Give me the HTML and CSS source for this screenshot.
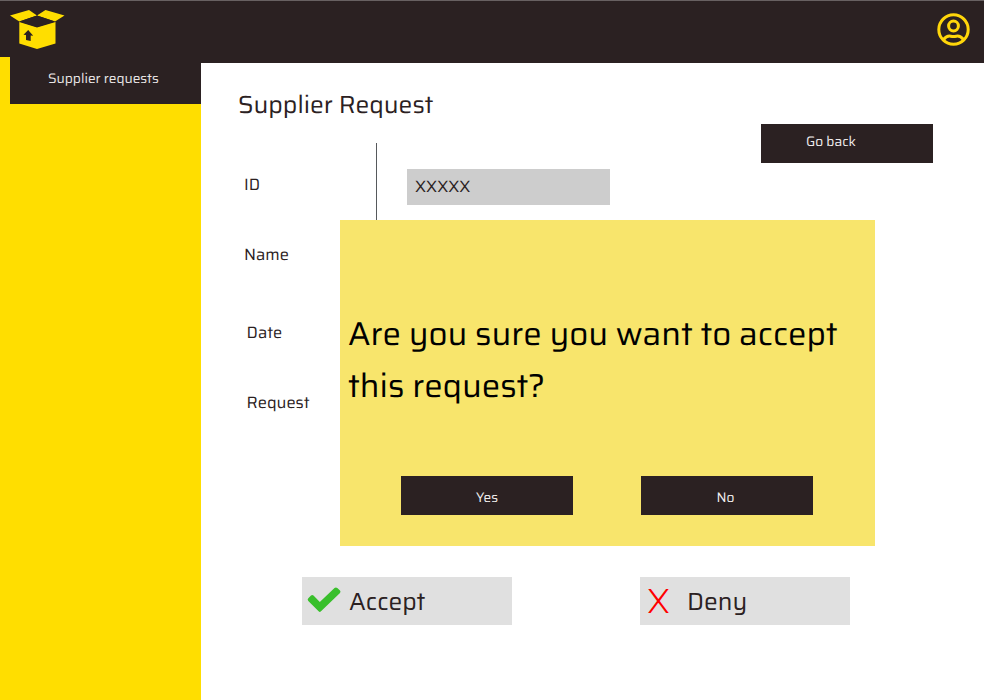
FILE: index.html
```html
<!DOCTYPE html>
<html lang="en">
<head>
<meta charset="utf-8">
<title>Supplier Request</title>
<link rel="stylesheet" href="styles.css">
</head>
<body>
<header class="topbar">
  <svg class="logo" width="55" height="40" viewBox="0 0 55 40" aria-label="Home">
    <path fill="#ffde00" d="M0 5.500 19 0l8 5.500L9.300 11.500zM54.500 5.500 35.500 0l-8.500 5.500 18 6zM9.300 12 27 17.500 45.500 12v21.500L27 39 9.300 33.500z"/>
    <path fill="#2b2122" d="M9.300 11.500 27 5.500l18 6-18 5.500z"/>
    <path fill="#2b2122" d="m18.200 20 5 5.800-2.500-.2V31l-4.700-1v-4.900l-2.500-.3z"/>
  </svg>
  <svg class="avatar" width="33" height="33" viewBox="0 0 33 33" fill="none" stroke="#ffd60a" stroke-width="3">
    <circle cx="16.500" cy="16.500" r="14.700"/>
    <circle cx="16.500" cy="13" r="4.900"/>
    <path d="M6.500 26.500c2.500-3 5-3.800 7.200-3.300 2 .5 3.600.5 5.600 0 2.200-.5 4.700.3 7.200 3.300"/>
  </svg>
</header>
<div class="body">
  <nav class="sidebar">
    <a class="tab">Supplier requests</a>
  </nav>
  <main class="content">
    <div class="head">
      <h1>Supplier Request</h1>
      <a class="btn back">Go back</a>
    </div>
    <div class="form">
      <div class="labels">
        <span class="id">ID</span>
        <span class="name">Name</span>
        <span class="date">Date</span>
        <span class="request">Request</span>
      </div>
      <div class="divider"></div>
      <div class="field">XXXXX</div>
    </div>
    <div class="actions">
      <button class="action">
        <svg width="34" height="26" viewBox="0 0 34 26"><path d="M1.300 11.300 4 8.600Q5.300 7.600 6.500 8.600L12.800 15 27.500.900Q29 0 30.300 1L33 3.600Q34 4.800 33 6L14 24.300Q12.800 25.500 11.600 24.300L1.300 14Q0 12.600 1.300 11.300z" fill="#39bf2c"/></svg>
        <span class="accept">Accept</span>
      </button>
      <button class="action">
        <span class="cross">X</span>
        <span class="deny">Deny</span>
      </button>
    </div>
  </main>
</div>
<div class="dialog" role="dialog">
  <p class="question">Are you sure you want to accept<br>this request?</p>
  <div class="choices">
    <a class="btn">Yes</a>
    <a class="btn no">No</a>
  </div>
</div>
</body>
</html>
```
FILE: styles.css
```css
* { box-sizing: border-box; }
body {
  margin: 0;
  width: 984px;
  height: 700px;
  overflow: hidden;
  position: relative;
  background: #fff;
  color: #2b2122;
  font-family: Saira, Roboto, "Open Sans", sans-serif;
  font-size: 16.4px;
  text-rendering: geometricPrecision;
}
.topbar {
  height: 63px;
  display: flex;
  justify-content: space-between;
  align-items: flex-start;
  padding: 9px 14px 0 10px;
  background: #2b2122;
  border-top: 1px solid #686162;
}
.avatar { margin-top: 3px; }
.body { display: flex; height: 637px; }
.sidebar { width: 201px; margin-top: -6px; background: #ffde00; }
.tab {
  display: block;
  height: 47px;
  border-left: 10px solid #ffde00;
  padding-left: 38px;
  background: #2b2122;
  color: #e9e6e6;
  font-size: 13.7px;
  line-height: 45px;
  white-space: nowrap;
}
.content { flex: 1; }
.head { display: flex; justify-content: space-between; height: 80px; padding: 26px 51px 0 37px; }
h1 { margin: 0; font-size: 24.7px; font-weight: 400; line-height: 32px; }
.btn {
  display: block;
  width: 172px;
  height: 39px;
  background: #2b2122;
  color: #f0eded;
  font-size: 13.7px;
  line-height: 45px;
  text-align: center;
}
.no { padding-right: 3px; }
.back { margin-top: 35px; padding-left: 45px; text-align: left; line-height: 37px; }
.form { display: flex; height: 434px; }
.labels { width: 175px; padding: 32px 0 0 43px; display: flex; flex-direction: column; }
.labels span { line-height: 20px; }
.name { margin-top: 50px; }
.labels .date, .labels .request { margin-left: 2.6px; }
.date { margin-top: 58px; }
.request { margin-top: 50px; }
.divider { width: 1px; height: 300px; background: #56595c; }
.field {
  width: 203px;
  height: 36px;
  margin: 26px 0 0 30px;
  padding-left: 8px;
  background: #cdcdcd;
  line-height: 36px;
}
.actions { display: flex; gap: 128px; padding-left: 101px; }
.action {
  display: flex;
  align-items: center;
  width: 210px;
  height: 48px;
  padding: 0 0 0 5px;
  border: 0;
  background: #e0e0e0;
  color: #2b2122;
  font: inherit;
  font-size: 24.6px;
  line-height: 48px;
}
.action svg { margin-top: -2px; }
.accept { margin: 2px 0 0 8px; }
.deny { margin-top: 2px; }
.cross { width: 42px; padding-left: 2px; text-align: left; color: #f00; font-size: 34px; font-weight: 350; }
.dialog {
  position: absolute;
  left: 340px;
  top: 220px;
  width: 535px;
  height: 326px;
  padding: 89px 0 0 8px;
  background: #f8e56c;
  color: #000;
}
.question { margin: 0; font-size: 33px; line-height: 52px; white-space: nowrap; }
.choices { display: flex; gap: 68px; margin: 63px 0 0 53px; }
```
